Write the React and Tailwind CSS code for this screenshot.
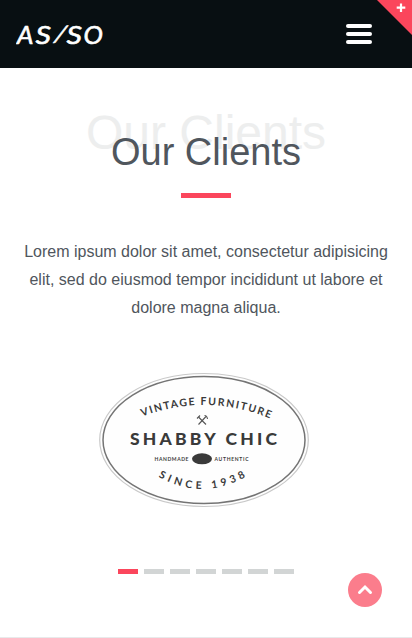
function Header() {
  return (
    <header className="relative flex h-[68px] items-center justify-between bg-[#080f12] pl-4 pr-10">
      <svg width="92" height="30" viewBox="16 20 92 30" fill="#fff" stroke="#fff" strokeWidth="0.6" strokeLinejoin="round" fontFamily="Lato, sans-serif" fontStyle="italic" fontSize="26">
        <text transform="translate(17 44.500)">A</text>
        <text transform="translate(35.500 44.500) scale(1.170 1)">S</text>
        <text transform="translate(53.500 42.700) skewX(-12) scale(1 .88)">/</text>
        <text transform="translate(66.500 44.500) scale(1.170 1)">S</text>
        <text transform="translate(83.500 44.500)">O</text>
      </svg>
      <button aria-label="Menu" className="flex w-[26px] flex-col gap-1">
        <span className="h-1 rounded-[2px] bg-white" />
        <span className="h-1 rounded-[2px] bg-white" />
        <span className="h-1 rounded-[2px] bg-white" />
      </button>
      <svg className="absolute right-0 top-0" width="35" height="35" viewBox="0 0 35 35">
        <path d="M0 0H35V35Z" fill="#fb465c" />
        <path d="M24 3.5V12M19.7 7.7H28.3" stroke="#fff" strokeWidth="2.2" />
      </svg>
    </header>
  );
}

function ClientLogo() {
  return (
    <svg className="ml-[83px] mt-[43px] block" width="212" height="144" viewBox="98 365 212 144" fontFamily="Lato, sans-serif" fill="#3a3a3a" textAnchor="middle">
      <defs>
        <path id="upper" d="M137 418.500Q206 390.500 275 420.500" />
        <path id="lower" d="M152 473Q202 505 252 473" />
      </defs>
      <ellipse cx="204" cy="440" rx="104.300" ry="66.500" fill="#fefefe" stroke="#c9c9c9" strokeWidth="1.200" />
      <ellipse cx="204" cy="440" rx="101" ry="63.500" fill="none" stroke="#747474" strokeWidth="1.500" />
      <text fontSize="10.500" fontWeight="700">
        <textPath href="#upper" startOffset="50%" textLength="131">VINTAGE FURNITURE</textPath>
      </text>
      <g stroke="#555" strokeWidth="1.100" fill="none">
        <path d="M198.500 424.500L206 416.500M206 424.500L198.500 417" />
        <path d="M197 418.500L200 415.500M204.500 415.500Q207 415.500 207.500 419" />
      </g>
      <text x="203.500" y="444.500" fontSize="17.500" fontWeight="900" textLength="147">SHABBY CHIC</text>
      <text x="171.500" y="461" fontSize="5" fontWeight="700" textLength="34">HANDMADE</text>
      <ellipse cx="202" cy="458.800" rx="10" ry="5.500" />
      <text x="231.500" y="461" fontSize="5" fontWeight="700" textLength="34">AUTHENTIC</text>
      <text fontSize="10.500" fontWeight="700">
        <textPath href="#lower" startOffset="50%" textLength="92">SINCE 1938</textPath>
      </text>
    </svg>
  );
}

export default function App() {
  return (
    <div className="relative h-[638px] overflow-hidden border-b border-[#e8eaeb] bg-white font-['Liberation_Sans',Arial,sans-serif] text-[#50565d]">
      <Header />
      <main className="px-[15px] pt-[63px] text-center">
        <div className="relative">
          <span className="absolute inset-x-0 -top-[25px] text-[48px] leading-[54px] text-[#edeeee]">Our Clients</span>
          <h2 className="relative text-[38px] leading-[42px]">Our Clients</h2>
        </div>
        <div className="mx-auto mt-5 h-[5px] w-[50px] bg-[#fb465c]" />
        <p className="mt-10 text-base leading-7">
          Lorem ipsum dolor sit amet, consectetur adipisicing elit, sed do eiusmod tempor incididunt ut labore et dolore magna aliqua.
        </p>
        <ClientLogo />
        <div className="mt-[60px] flex justify-center gap-1.5">
          <span className="h-[5px] w-5 bg-[#fb465c]" />
          {[1, 2, 3, 4, 5, 6].map((n) => (
            <span key={n} className="h-[5px] w-5 bg-[#d2d5d5]" />
          ))}
        </div>
      </main>
      <button aria-label="Back to top" className="absolute left-[348px] top-[573px] flex size-[34px] items-center justify-center rounded-full bg-[#fb7d8c]">
        <svg width="16" height="12" viewBox="0 0 16 12">
          <path d="M2.500 8.500L8 3L13.500 8.500" fill="none" stroke="#fff" strokeWidth="3" strokeLinecap="round" />
        </svg>
      </button>
    </div>
  );
}
